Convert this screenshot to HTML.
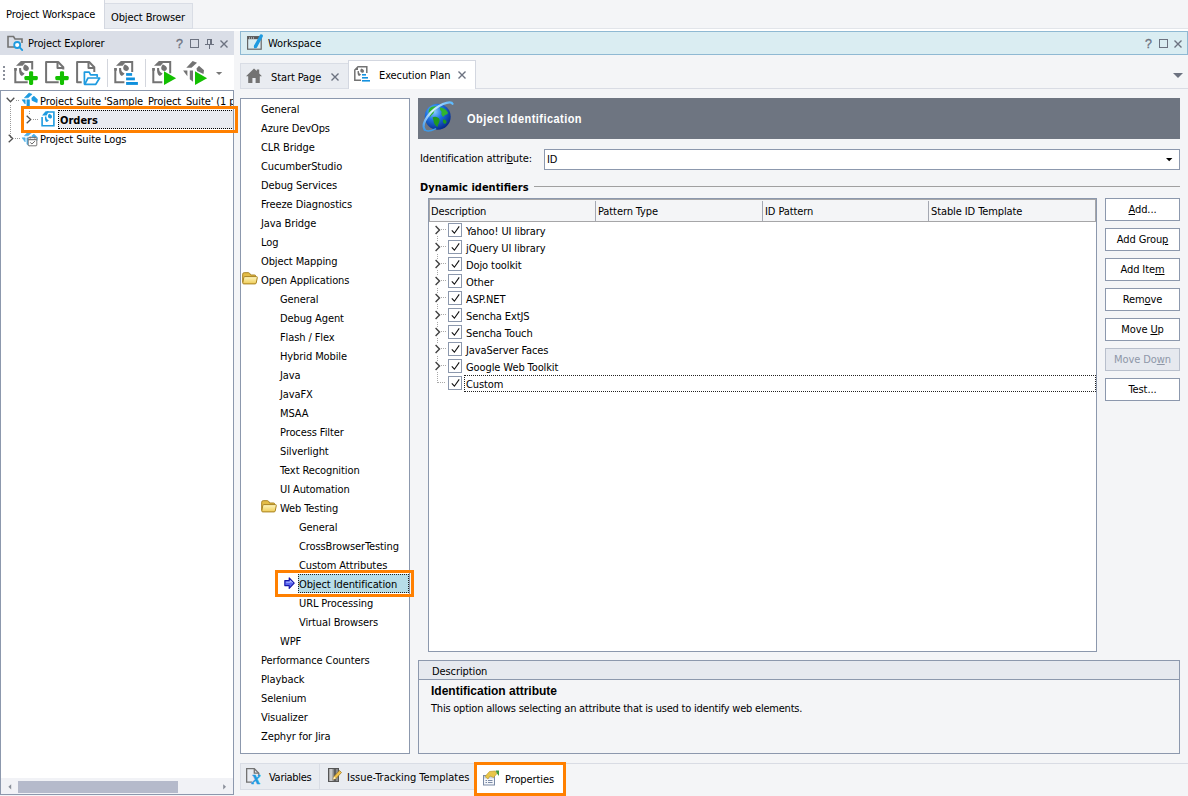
<!DOCTYPE html>
<html lang="en">
<head>
<meta charset="utf-8">
<title>Object Identification</title>
<style>
*{box-sizing:border-box;margin:0;padding:0}
html,body{width:1188px;height:796px;overflow:hidden}
body{position:relative;background:#f4f5f7;font-family:"DejaVu Sans Condensed","Liberation Sans","DejaVu Sans",sans-serif;font-size:11px;color:#000;letter-spacing:-0.1px;line-height:13px}
.a{position:absolute}
.t{position:absolute;white-space:nowrap;height:13px;line-height:13px}
.b{font-family:"Liberation Sans",sans-serif;font-weight:bold;letter-spacing:0}
.db{font-weight:bold;letter-spacing:0}
u{text-decoration:underline;text-underline-offset:1px}
svg{position:absolute;overflow:visible}
#toptabs-line{left:0;top:28px;width:1188px;height:3px;background:#fff;border-top:1px solid #e2e5ea}
#tab-pw{left:0;top:0;width:105px;height:29px;background:#fff;border-right:1px solid #d3d7e0}
#tab-ob{left:105px;top:3px;width:88px;height:26px;background:#e9ecf1;border:1px solid #d9dde5;border-left:none}
#pe-head{left:0;top:31px;width:234px;height:24px;background:#dadee7}
#pe-tree{left:0;top:90px;width:234px;height:705px;background:#fff;border:1px solid #8c98ad;overflow:hidden}
#pe-scroll{left:1px;top:778px;width:232px;height:16px;background:#f1f2f6}
#pe-thumb{left:18px;top:781px;width:160px;height:12px;background:#b5bacb}
.obox{position:absolute;border:3px solid #ff8000}
#ws-head{left:240px;top:31px;width:948px;height:24px;background:#daedf2;border:1px solid #8fb9d3}
#ws-tabline{left:240px;top:88px;width:948px;height:1px;background:#d9dce4}
#tab-sp{left:240px;top:63px;width:109px;height:26px;background:#e9ecf1;border:1px solid #d9dde5}
#tab-ep{left:348px;top:60px;width:128px;height:29px;background:#fff;border:1px solid #d3d7e0;border-bottom:none}
#opt-tree{left:240px;top:98px;width:170px;height:656px;background:#fff;border:1px solid #8c98ad}
#banner{left:418px;top:98px;width:762px;height:41px;background:#6e7581}
#combo{left:544px;top:149px;width:636px;height:21px;background:#fff;border:1px solid #8c98ad}
#dyn-line{left:534px;top:186px;width:646px;height:1px;background:#a0a0a0}
#grid{left:428px;top:198px;width:669px;height:454px;background:#fff;border:1px solid #8c98ad}
#grid-head{left:429px;top:199px;width:667px;height:23px;background:#f4f5f7;border:1px solid #9a9ea8;border-top:2px solid #9a9ea8;border-left:2px solid #9a9ea8}
.colsep{position:absolute;top:201px;width:1px;height:20px;background:#9a9ea8}
.btn{position:absolute;left:1105px;width:75px;height:23px;background:#fff;border:1px solid #8c98ad;text-align:center;line-height:22px}
.btn.dis{background:#e6e9ef;color:#8e97a8;border-color:#b8bfcc}
.cb{position:absolute;left:448px;width:14px;height:14px;background:#fff;border:1px solid #8c98ad}
#desc{left:418px;top:660px;width:762px;height:94px;border:1px solid #8c98ad;background:#f4f5f7}
#desc-head{left:419px;top:661px;width:760px;height:19px;background:#e6e9ef;border-bottom:1px solid #8c98ad}
#bt-line{left:240px;top:763px;width:948px;height:1px;background:#d9dce4}
#bt-var{left:240px;top:763px;width:80px;height:27px;background:#e9ecf1;border:1px solid #d9dde5}
#bt-iss{left:319px;top:763px;width:156px;height:27px;background:#e9ecf1;border:1px solid #d9dde5}
#bt-prop{left:474px;top:763px;width:92px;height:33px;background:#fff}
</style>
</head>
<body>
<div class="a" id="toptabs-line"></div>
<div class="a" id="tab-pw"></div>
<div class="a" id="tab-ob"></div>
<div class="t" style="left:6px;top:8px">Project Workspace</div>
<div class="t" style="left:111px;top:11px">Object Browser</div>
<div class="a" id="pe-head"></div>
<svg style="left:6px;top:34px" width="18" height="17" viewBox="0 0 18 17"><path d="M16,9 V5 H9 L7.5,2.5 H2 V13 H8" fill="none" stroke="#737373" stroke-width="1.6"/><circle cx="11.2" cy="11" r="3" fill="#fff" stroke="#1e9be0" stroke-width="1.8"/><path d="M13.4,13.2 L16.2,16" stroke="#1e9be0" stroke-width="1.8" stroke-linecap="round"/></svg>
<div class="t" style="left:28px;top:37px">Project Explorer</div>
<div class="t" style="left:176px;top:38px;color:#6c7280;font-size:12.5px;font-family:'Liberation Sans',sans-serif;-webkit-text-stroke:0.3px #6c7280">?</div>
<svg style="left:190px;top:39px" width="9" height="9" viewBox="0 0 9 9"><rect x="0.5" y="0.5" width="8" height="8" fill="none" stroke="#6c7280" stroke-width="1"/></svg>
<svg style="left:205px;top:39px" width="9" height="10" viewBox="0 0 9 10"><path d="M0,5.5 H9 M4.5,5.5 V10" stroke="#6c7280" stroke-width="1" fill="none"/><rect x="2.5" y="0.5" width="4" height="5" fill="none" stroke="#6c7280"/><rect x="5" y="0.5" width="1.5" height="5" fill="#6c7280"/></svg>
<svg style="left:220px;top:40px" width="8" height="8" viewBox="0 0 8 8"><path d="M0.5,0.5 L7.5,7.5 M7.5,0.5 L0.5,7.5" stroke="#6c7280" stroke-width="1.4" fill="none"/></svg>
<div class="a" style="left:0;top:55px;width:234px;height:35px;background:#fff"></div>
<svg style="left:3px;top:65px" width="2" height="16" viewBox="0 0 2 16"><rect x="0" y="1" width="2" height="2" fill="#8a8f9a"/><rect x="0" y="5" width="2" height="2" fill="#8a8f9a"/><rect x="0" y="9" width="2" height="2" fill="#8a8f9a"/><rect x="0" y="13" width="2" height="2" fill="#8a8f9a"/></svg>
<svg style="left:14px;top:61px" width="26" height="26" viewBox="0 0 26 26"><path d="M1.3,7.1 V21.15 H13.7" fill="none" stroke="#737373" stroke-width="2"/><rect x="0.3" y="7.1" width="2.6" height="2.6" fill="#737373"/><path d="M8,1 H18.2 V8.6" fill="none" stroke="#737373" stroke-width="2"/><path d="M2,4.7 L6.9,0 H11 V2 L8.6,4.7 Z" fill="#737373"/><g transform="translate(0,0) scale(1)" fill="#737373"><path d="M5.1,7.1 L7.1,7.1 C7,10 8,11.6 10.6,12.4 C9.6,13.8 8.4,14.6 7.2,14.8 C5.4,13.5 4.9,11 5.1,7.1 Z"/><path d="M10.7,3.5 C13.2,4.2 15.3,6 14.8,8.1 C14.3,10.1 12,10.5 10.3,9.3 C8.6,8 9,5.6 10.7,3.5 Z"/></g><rect x="10.400000000000002" y="15.05" width="13.4" height="4.1" rx="1.3" fill="#13c000"/><rect x="15.05" y="10.3" width="4.1" height="13.6" rx="1.3" fill="#13c000"/></svg>
<svg style="left:45px;top:61px" width="26" height="26" viewBox="0 0 26 26"><path d="M13.7,21.15 H1.1 V1 H13.2 L18.3,6.2 V8.6" fill="none" stroke="#737373" stroke-width="2" stroke-linejoin="round"/><path d="M12.5,1 V7 H18.3" fill="none" stroke="#737373" stroke-width="2" stroke-linejoin="round"/><rect x="10.3" y="15.05" width="13.4" height="4.1" rx="1.3" fill="#13c000"/><rect x="14.95" y="10.3" width="4.1" height="13.6" rx="1.3" fill="#13c000"/></svg>
<svg style="left:76px;top:61px" width="26" height="26" viewBox="0 0 26 26"><path d="M5.7,21.15 H1.1 V1 H13.2 L18.3,6.2 V10.9" fill="none" stroke="#737373" stroke-width="2" stroke-linejoin="round"/><path d="M12.5,1 V7 H18.3" fill="none" stroke="#737373" stroke-width="2" stroke-linejoin="round"/><path d="M8.4,23.2 V11.2 H13.2 L14.6,13.8 H21.2 V16.2" fill="none" stroke="#1e9be0" stroke-width="1.7" stroke-linejoin="round"/><path d="M8.7,23.3 L12,17 H23.6 L19.8,23.3 Z" fill="#fff" stroke="#1e9be0" stroke-width="1.7" stroke-linejoin="round"/></svg>
<div class="a" style="left:107px;top:59px;width:1px;height:28px;background:#d3d6dd"></div>
<svg style="left:114px;top:61px" width="26" height="26" viewBox="0 0 26 26"><path d="M1.3,7.1 V21.15 H10.4" fill="none" stroke="#737373" stroke-width="2"/><rect x="0.3" y="7.1" width="2.6" height="2.6" fill="#737373"/><path d="M8,1 H18.2 V10.9" fill="none" stroke="#737373" stroke-width="2"/><path d="M2,4.7 L6.9,0 H11 V2 L8.6,4.7 Z" fill="#737373"/><g transform="translate(0,0) scale(1)" fill="#737373"><path d="M5.1,7.1 L7.1,7.1 C7,10 8,11.6 10.6,12.4 C9.6,13.8 8.4,14.6 7.2,14.8 C5.4,13.5 4.9,11 5.1,7.1 Z"/><path d="M10.7,3.5 C13.2,4.2 15.3,6 14.8,8.1 C14.3,10.1 12,10.5 10.3,9.3 C8.6,8 9,5.6 10.7,3.5 Z"/></g><rect x="12.1" y="12.1" width="6" height="2.7" fill="#0f90dc"/><rect x="12.1" y="16.5" width="8.8" height="2.8" fill="#0f90dc"/><rect x="12.1" y="21" width="11.8" height="2.9" fill="#0f90dc"/></svg>
<div class="a" style="left:145px;top:59px;width:1px;height:28px;background:#d3d6dd"></div>
<svg style="left:152px;top:61px" width="26" height="26" viewBox="0 0 26 26"><path d="M1.3,7.1 V21.15 H10.3" fill="none" stroke="#737373" stroke-width="2"/><rect x="0.3" y="7.1" width="2.6" height="2.6" fill="#737373"/><path d="M8,1 H18.2 V12.3" fill="none" stroke="#737373" stroke-width="2"/><path d="M2,4.7 L6.9,0 H11 V2 L8.6,4.7 Z" fill="#737373"/><g transform="translate(0,0) scale(1)" fill="#737373"><path d="M5.1,7.1 L7.1,7.1 C7,10 8,11.6 10.6,12.4 C9.6,13.8 8.4,14.6 7.2,14.8 C5.4,13.5 4.9,11 5.1,7.1 Z"/><path d="M10.7,3.5 C13.2,4.2 15.3,6 14.8,8.1 C14.3,10.1 12,10.5 10.3,9.3 C8.6,8 9,5.6 10.7,3.5 Z"/></g><path d="M12,10.2 L24.1,17.2 L12,24.1 Z" fill="#13c000"/></svg>
<svg style="left:183px;top:61px" width="26" height="26" viewBox="0 0 26 26"><path d="M3.3,6.7 L9.6,0 L14,1.8 L8.5,6.7 Z" fill="#737373"/><path d="M13.5,7.5 L16,4.8 L21,9.3 L20.5,13 L14,10 Z" fill="#737373"/><path d="M0.1,9.5 H4.4 V15.2 Z" fill="#737373"/><path d="M6.8,9.5 H10 V20.8 L6.8,18.3 Z" fill="#737373"/><path d="M12,10.2 L24.1,17.2 L12,24.1 Z" fill="#13c000"/></svg>
<svg style="left:216px;top:72px" width="7" height="4" viewBox="0 0 7 4"><path d="M0,0 H6.2 L3.1,3.1 Z" fill="#777"/></svg>
<div class="a" id="pe-tree"><div class="a" style="left:57px;top:19px;width:176px;height:19px;background:#e9ebf0;border:1px dotted #000"></div><svg style="left:0;top:0" width="60" height="60"><g stroke="#9a9a9a" stroke-width="1" stroke-dasharray="1 1" fill="none"><path d="M9.5,14 V47"/><path d="M15,9.5 H19"/><path d="M14,47.5 H19"/><path d="M28.5,20 V24"/><path d="M32,28.5 H38"/></g></svg><svg style="left:5px;top:6px" width="9" height="6"><path d="M0.7,0.7 L4.5,4.7 L8.3,0.7" fill="none" stroke="#505050" stroke-width="1.3"/></svg><svg style="left:25px;top:24px" width="6" height="9"><path d="M0.7,0.7 L4.7,4.5 L0.7,8.3" fill="none" stroke="#505050" stroke-width="1.3"/></svg><svg style="left:7px;top:43px" width="6" height="9"><path d="M0.7,0.7 L4.7,4.5 L0.7,8.3" fill="none" stroke="#505050" stroke-width="1.3"/></svg><div class="t" style="left:39px;top:4px">Project Suite &#39;Sample_Project_Suite&#39; (1 project)</div><div class="t db" style="left:59px;top:23px">Orders</div><div class="t" style="left:39px;top:42px">Project Suite Logs</div></div>
<svg style="left:21.6px;top:92.6px" width="17" height="16" viewBox="0 0 17 16"><g transform="scale(0.72)" fill="#1e9be0" stroke="#1e9be0" stroke-width="0.8" stroke-linejoin="round"><path d="M3.3,6.7 L9.6,0 L14,1.8 L8.5,6.7 Z"/><path d="M14,7.3 L16.3,5 L21,9.3 L20.6,12.6 L14.4,9.8 Z" stroke-width="1.8"/><path d="M0.1,9.5 H4.4 V15.2 Z"/><path d="M6.8,9.5 H10.4 V20.8 L6.8,18.3 Z"/></g></svg>
<svg style="left:41px;top:111px" width="16" height="17" viewBox="0 0 16 17"><path d="M1.1,6 V14.8 H12.9 V1 H6" fill="none" stroke="#1e9be0" stroke-width="1.6"/><path d="M1,4.6 L4.6,0.3 H8 L5.6,4.6 Z" fill="#1e9be0"/><g transform="translate(0.3,0.3) scale(0.72)" fill="#1e9be0"><path d="M5.1,7.1 L7.1,7.1 C7,10 8,11.6 10.6,12.4 C9.6,13.8 8.4,14.6 7.2,14.8 C5.4,13.5 4.9,11 5.1,7.1 Z"/><path d="M10.7,3.5 C13.2,4.2 15.3,6 14.8,8.1 C14.3,10.1 12,10.5 10.3,9.3 C8.6,8 9,5.6 10.7,3.5 Z"/></g></svg>
<svg style="left:21.6px;top:130.6px" width="17" height="17" viewBox="0 0 17 17"><g transform="scale(0.72)" fill="#4db0e8" stroke="#4db0e8" stroke-width="0.8" stroke-linejoin="round"><path d="M3.3,6.7 L9.6,0 L14,1.8 L8.5,6.7 Z"/><path d="M14,7.3 L16.3,5 L21,9.3 L20.6,12.6 L14.4,9.8 Z" stroke-width="1.8"/><path d="M0.1,9.5 H4.4 V15.2 Z"/><path d="M6.8,9.5 H10.4 V20.8 L6.8,18.3 Z"/></g><rect x="6.2" y="6.6" width="8.6" height="8.2" rx="0.8" fill="#fff" stroke="#777" stroke-width="1"/><path d="M6.2,8.6 H14.8 M8.2,5.4 V7.6 M12.8,5.4 V7.6" stroke="#777" stroke-width="1.3"/><path d="M8.2,11.3 L9.9,13 L12.9,10.2" fill="none" stroke="#666" stroke-width="1"/></svg>
<div class="a" id="pe-scroll"></div>
<div class="a" id="pe-thumb"></div>
<svg style="left:8px;top:784px" width="4" height="6" viewBox="0 0 4 6"><path d="M3.2,0.2 V5.4 L0.4,2.8 Z" fill="#8a8f9a"/></svg>
<svg style="left:223px;top:784px" width="4" height="6" viewBox="0 0 4 6"><path d="M0.2,0.2 V5.4 L3,2.8 Z" fill="#8a8f9a"/></svg>
<div class="obox" style="left:21px;top:106px;width:217px;height:27px"></div>
<div class="a" id="ws-head"></div>
<svg style="left:247px;top:34px" width="17" height="17" viewBox="0 0 17 17"><rect x="0.6" y="2.6" width="13.6" height="12.6" fill="none" stroke="#666" stroke-width="1.2"/><rect x="0.6" y="2.6" width="12" height="2.6" fill="#5a5a5a"/><path d="M2,4 H3 M4,4 H5 M6,4 H7" stroke="#e8eef2" stroke-width="1"/><path d="M8.6,12.4 L14.2,2" stroke="#1e9be0" stroke-width="3.4" stroke-linecap="round"/><path d="M6.9,14.6 L7.4,10.8 L10.4,12.6 Z" fill="#1e9be0"/></svg>
<div class="t" style="left:268px;top:37px">Workspace</div>
<div class="t" style="left:1145px;top:38px;color:#6c7280;font-size:12.5px;font-family:'Liberation Sans',sans-serif;-webkit-text-stroke:0.3px #6c7280">?</div>
<svg style="left:1159px;top:39px" width="9" height="9" viewBox="0 0 9 9"><rect x="0.5" y="0.5" width="8" height="8" fill="none" stroke="#6c7280" stroke-width="1"/></svg>
<svg style="left:1174px;top:40px" width="8" height="8" viewBox="0 0 8 8"><path d="M0.5,0.5 L7.5,7.5 M7.5,0.5 L0.5,7.5" stroke="#6c7280" stroke-width="1.4" fill="none"/></svg>
<div class="a" id="ws-tabline"></div>
<div class="a" id="tab-sp"></div>
<div class="a" id="tab-ep"></div>
<svg style="left:246px;top:68px" width="17" height="16" viewBox="0 0 17 16"><path d="M0,8.2 L8,0.4 L10.8,3.1 V1.4 H13.2 V5.5 L16,8.2 H13.8 V15 H9.6 V10 H6.4 V15 H2.2 V8.2 Z" fill="#737373"/></svg>
<div class="t" style="left:271px;top:71px">Start Page</div>
<svg style="left:331px;top:73px" width="8" height="8" viewBox="0 0 8 8"><path d="M0.5,0.5 L7.5,7.5 M7.5,0.5 L0.5,7.5" stroke="#6c7280" stroke-width="1.4" fill="none"/></svg>
<svg style="left:354px;top:66px" width="17" height="17" viewBox="0 0 17 17"><path d="M7,14.2 H0.8 V4 L4,0.8 H12.8 V7" fill="none" stroke="#737373" stroke-width="1.5"/><path d="M0.8,4 L4,0.8 V4 Z" fill="#737373"/><g transform="translate(0.2,0.2) scale(0.66)" fill="#737373"><path d="M5.1,7.1 L7.1,7.1 C7,10 8,11.6 10.6,12.4 C9.6,13.8 8.4,14.6 7.2,14.8 C5.4,13.5 4.9,11 5.1,7.1 Z"/><path d="M10.7,3.5 C13.2,4.2 15.3,6 14.8,8.1 C14.3,10.1 12,10.5 10.3,9.3 C8.6,8 9,5.6 10.7,3.5 Z"/></g><rect x="8" y="8" width="4" height="1.6" fill="#1592e0"/><rect x="8" y="11" width="6" height="1.6" fill="#1592e0"/><rect x="8" y="14" width="8" height="1.6" fill="#1592e0"/></svg>
<div class="t" style="left:379px;top:69px">Execution Plan</div>
<svg style="left:458px;top:71px" width="8" height="8" viewBox="0 0 8 8"><path d="M0.5,0.5 L7.5,7.5 M7.5,0.5 L0.5,7.5" stroke="#6c7280" stroke-width="1.4" fill="none"/></svg>
<svg style="left:1173px;top:73px" width="10" height="5" viewBox="0 0 10 5"><path d="M0,0 H10 L5,5 Z" fill="#6c7280"/></svg>
<div class="a" id="opt-tree"></div>
<div class="a" style="left:298px;top:574px;width:111px;height:19px;background:#b7dde8;border:1px dotted #222"></div>
<div class="t" style="left:261px;top:103px">General</div>
<div class="t" style="left:261px;top:122px">Azure DevOps</div>
<div class="t" style="left:261px;top:141px">CLR Bridge</div>
<div class="t" style="left:261px;top:160px">CucumberStudio</div>
<div class="t" style="left:261px;top:179px">Debug Services</div>
<div class="t" style="left:261px;top:198px">Freeze Diagnostics</div>
<div class="t" style="left:261px;top:217px">Java Bridge</div>
<div class="t" style="left:261px;top:236px">Log</div>
<div class="t" style="left:261px;top:255px">Object Mapping</div>
<div class="t" style="left:261px;top:274px">Open Applications</div>
<div class="t" style="left:280px;top:293px">General</div>
<div class="t" style="left:280px;top:312px">Debug Agent</div>
<div class="t" style="left:280px;top:331px">Flash / Flex</div>
<div class="t" style="left:280px;top:350px">Hybrid Mobile</div>
<div class="t" style="left:280px;top:369px">Java</div>
<div class="t" style="left:280px;top:388px">JavaFX</div>
<div class="t" style="left:280px;top:407px">MSAA</div>
<div class="t" style="left:280px;top:426px">Process Filter</div>
<div class="t" style="left:280px;top:445px">Silverlight</div>
<div class="t" style="left:280px;top:464px">Text Recognition</div>
<div class="t" style="left:280px;top:483px">UI Automation</div>
<div class="t" style="left:280px;top:502px">Web Testing</div>
<div class="t" style="left:299px;top:521px">General</div>
<div class="t" style="left:299px;top:540px">CrossBrowserTesting</div>
<div class="t" style="left:299px;top:559px">Custom Attributes</div>
<div class="t" style="left:299px;top:578px">Object Identification</div>
<div class="t" style="left:299px;top:597px">URL Processing</div>
<div class="t" style="left:299px;top:616px">Virtual Browsers</div>
<div class="t" style="left:280px;top:635px">WPF</div>
<div class="t" style="left:261px;top:654px">Performance Counters</div>
<div class="t" style="left:261px;top:673px">Playback</div>
<div class="t" style="left:261px;top:692px">Selenium</div>
<div class="t" style="left:261px;top:711px">Visualizer</div>
<div class="t" style="left:261px;top:730px">Zephyr for Jira</div>
<svg style="left:242px;top:272px" width="17" height="14" viewBox="0 0 17 14"><defs><linearGradient id="fg" x1="0" y1="0" x2="0" y2="1"><stop offset="0" stop-color="#fff8c4"/><stop offset="1" stop-color="#eecb55"/></linearGradient></defs><path d="M0.7,10.5 V2.2 Q0.7,0.7 2.2,0.7 H6.3 Q7.4,0.7 7.9,1.7 L8.6,3 H12.6 Q13.7,3 13.7,4.2 V6" fill="#e4bd48" stroke="#a98322" stroke-width="1"/><path d="M0.8,10.8 L1.8,5.5 Q2,4.6 3,4.6 H14.4 Q15.5,4.6 15.3,5.6 L14.2,11 Q14,11.9 13,11.9 H1.8 Q0.6,11.9 0.8,10.8 Z" fill="url(#fg)" stroke="#a98322" stroke-width="1"/></svg>
<svg style="left:261px;top:500px" width="17" height="14" viewBox="0 0 17 14"><defs><linearGradient id="fg" x1="0" y1="0" x2="0" y2="1"><stop offset="0" stop-color="#fff8c4"/><stop offset="1" stop-color="#eecb55"/></linearGradient></defs><path d="M0.7,10.5 V2.2 Q0.7,0.7 2.2,0.7 H6.3 Q7.4,0.7 7.9,1.7 L8.6,3 H12.6 Q13.7,3 13.7,4.2 V6" fill="#e4bd48" stroke="#a98322" stroke-width="1"/><path d="M0.8,10.8 L1.8,5.5 Q2,4.6 3,4.6 H14.4 Q15.5,4.6 15.3,5.6 L14.2,11 Q14,11.9 13,11.9 H1.8 Q0.6,11.9 0.8,10.8 Z" fill="url(#fg)" stroke="#a98322" stroke-width="1"/></svg>
<svg style="left:284px;top:577px" width="11" height="12" viewBox="0 0 11 12"><path d="M5.2,0.8 V3.6 H0.8 V8.6 H5.2 V11.4 L10.2,6.1 Z" fill="#5a66f0" stroke="#1414a8" stroke-width="1.1" stroke-linejoin="round"/><path d="M2.2,5.2 H6.4 V3.6 L8.6,6" stroke="#b4beff" stroke-width="1" fill="none"/></svg>
<div class="obox" style="left:275px;top:570px;width:139px;height:27px"></div>
<div class="a" id="banner"></div>
<svg style="left:421px;top:100px" width="34" height="34" viewBox="0 0 34 34"><defs><radialGradient id="gl" cx="0.36" cy="0.3" r="0.8"><stop offset="0" stop-color="#8fd0ff"/><stop offset="0.4" stop-color="#1f74e4"/><stop offset="1" stop-color="#04207a"/></radialGradient><linearGradient id="rg" x1="1" y1="0" x2="0" y2="1"><stop offset="0" stop-color="#58b8ff"/><stop offset="0.5" stop-color="#d8f0ff"/><stop offset="1" stop-color="#3a98f0"/></linearGradient></defs><circle cx="16.7" cy="16.7" r="13" fill="url(#gl)"/><path d="M8.5,8.5 C10.5,6.5 14,5.5 16.5,6.8 C15.5,9 13.5,9.8 13,12 C12.5,14.2 10.2,14.8 9.2,17 C7.8,15.2 6.8,11.5 8.5,8.5Z" fill="#2fb52f"/><path d="M11.5,17.5 C14,16 17.5,17 18.5,19.5 C19,22 17,23.5 16.5,27 C14,25.5 12.5,22.5 12.5,20.5 Z" fill="#1f9a1f"/><path d="M19,7.5 C22.5,7.5 26,10 27,13 C26,15.2 23.5,14 22.5,17 C20.8,15.8 19.6,13.5 20.8,12 C19.6,10.8 18.5,9.5 19,7.5Z" fill="#2fb52f"/><path d="M22,19.5 C24.2,19 26,20.5 25.4,22.8 C24.3,24.5 22.6,23.8 22,22Z" fill="#1f9a1f"/><path d="M3.6,29.5 C-0.5,24 9,9.5 22,4 C27.5,1.8 31,2 31.6,3.8" fill="none" stroke="url(#rg)" stroke-width="2.2" stroke-linecap="round"/><path d="M3.6,29.5 C5.4,31.6 10,31 14.5,28.8" fill="none" stroke="#3f9be8" stroke-width="1.5" stroke-linecap="round"/></svg>
<div class="t b" style="left:467px;top:111px;color:#fff;font-size:12.5px;letter-spacing:0.5px;height:16px;line-height:16px;transform:scaleX(0.88);transform-origin:0 0">Object Identification</div>
<div class="t" style="left:420px;top:152px">Identification attri<u>b</u>ute:</div>
<div class="a" id="combo"></div>
<div class="t" style="left:547px;top:153px">ID</div>
<svg style="left:1166px;top:158px" width="7" height="4" viewBox="0 0 7 4"><path d="M0,0 H6.4 L3.2,3.3 Z" fill="#000"/></svg>
<div class="t db" style="left:420px;top:181px">Dynamic identifiers</div>
<div class="a" id="dyn-line"></div>
<div class="a" id="grid"></div>
<div class="a" style="left:429px;top:199px;width:667px;height:23px;background:#f4f5f7;border:1px solid #a6a6a8"></div>
<div class="a" style="left:595px;top:201px;width:1px;height:20px;background:#a4a8b2"></div>
<div class="a" style="left:762px;top:201px;width:1px;height:20px;background:#a4a8b2"></div>
<div class="a" style="left:928px;top:201px;width:1px;height:20px;background:#a4a8b2"></div>
<div class="t" style="left:431px;top:205px">Description</div>
<div class="t" style="left:598px;top:205px">Pattern Type</div>
<div class="t" style="left:765px;top:205px">ID Pattern</div>
<div class="t" style="left:931px;top:205px">Stable ID Template</div>
<svg style="left:430px;top:222px" width="20" height="180" viewBox="0 0 20 180"><g stroke="#a8a8a8" stroke-width="1" stroke-dasharray="1 1" fill="none"><path d="M7.5,12 V161"/><path d="M11,7.5 H16"/><path d="M11,24.5 H16"/><path d="M11,41.5 H16"/><path d="M11,58.5 H16"/><path d="M11,75.5 H16"/><path d="M11,92.5 H16"/><path d="M11,109.5 H16"/><path d="M11,126.5 H16"/><path d="M11,143.5 H16"/><path d="M8,160.5 H16"/></g></svg>
<div class="a" style="left:434px;top:225px;width:7px;height:11px;background:#fff"></div>
<svg style="left:435px;top:225px" width="6" height="10" viewBox="0 0 6 10"><path d="M0.6,0.9 L4.5,4.9 L0.6,8.9" fill="none" stroke="#404040" stroke-width="1.4"/></svg>
<div class="cb" style="top:223px"><svg style="left:0;top:0" width="12" height="12"><path d="M2.8,6.4 L5.4,9.2 L10.2,2.4" fill="none" stroke="#111" stroke-width="1.1"/></svg></div>
<div class="t" style="left:466px;top:225px">Yahoo! UI library</div>
<div class="a" style="left:434px;top:242px;width:7px;height:11px;background:#fff"></div>
<svg style="left:435px;top:242px" width="6" height="10" viewBox="0 0 6 10"><path d="M0.6,0.9 L4.5,4.9 L0.6,8.9" fill="none" stroke="#404040" stroke-width="1.4"/></svg>
<div class="cb" style="top:240px"><svg style="left:0;top:0" width="12" height="12"><path d="M2.8,6.4 L5.4,9.2 L10.2,2.4" fill="none" stroke="#111" stroke-width="1.1"/></svg></div>
<div class="t" style="left:466px;top:242px">jQuery UI library</div>
<div class="a" style="left:434px;top:259px;width:7px;height:11px;background:#fff"></div>
<svg style="left:435px;top:259px" width="6" height="10" viewBox="0 0 6 10"><path d="M0.6,0.9 L4.5,4.9 L0.6,8.9" fill="none" stroke="#404040" stroke-width="1.4"/></svg>
<div class="cb" style="top:257px"><svg style="left:0;top:0" width="12" height="12"><path d="M2.8,6.4 L5.4,9.2 L10.2,2.4" fill="none" stroke="#111" stroke-width="1.1"/></svg></div>
<div class="t" style="left:466px;top:259px">Dojo toolkit</div>
<div class="a" style="left:434px;top:276px;width:7px;height:11px;background:#fff"></div>
<svg style="left:435px;top:276px" width="6" height="10" viewBox="0 0 6 10"><path d="M0.6,0.9 L4.5,4.9 L0.6,8.9" fill="none" stroke="#404040" stroke-width="1.4"/></svg>
<div class="cb" style="top:274px"><svg style="left:0;top:0" width="12" height="12"><path d="M2.8,6.4 L5.4,9.2 L10.2,2.4" fill="none" stroke="#111" stroke-width="1.1"/></svg></div>
<div class="t" style="left:466px;top:276px">Other</div>
<div class="a" style="left:434px;top:293px;width:7px;height:11px;background:#fff"></div>
<svg style="left:435px;top:293px" width="6" height="10" viewBox="0 0 6 10"><path d="M0.6,0.9 L4.5,4.9 L0.6,8.9" fill="none" stroke="#404040" stroke-width="1.4"/></svg>
<div class="cb" style="top:291px"><svg style="left:0;top:0" width="12" height="12"><path d="M2.8,6.4 L5.4,9.2 L10.2,2.4" fill="none" stroke="#111" stroke-width="1.1"/></svg></div>
<div class="t" style="left:466px;top:293px">ASP.NET</div>
<div class="a" style="left:434px;top:310px;width:7px;height:11px;background:#fff"></div>
<svg style="left:435px;top:310px" width="6" height="10" viewBox="0 0 6 10"><path d="M0.6,0.9 L4.5,4.9 L0.6,8.9" fill="none" stroke="#404040" stroke-width="1.4"/></svg>
<div class="cb" style="top:308px"><svg style="left:0;top:0" width="12" height="12"><path d="M2.8,6.4 L5.4,9.2 L10.2,2.4" fill="none" stroke="#111" stroke-width="1.1"/></svg></div>
<div class="t" style="left:466px;top:310px">Sencha ExtJS</div>
<div class="a" style="left:434px;top:327px;width:7px;height:11px;background:#fff"></div>
<svg style="left:435px;top:327px" width="6" height="10" viewBox="0 0 6 10"><path d="M0.6,0.9 L4.5,4.9 L0.6,8.9" fill="none" stroke="#404040" stroke-width="1.4"/></svg>
<div class="cb" style="top:325px"><svg style="left:0;top:0" width="12" height="12"><path d="M2.8,6.4 L5.4,9.2 L10.2,2.4" fill="none" stroke="#111" stroke-width="1.1"/></svg></div>
<div class="t" style="left:466px;top:327px">Sencha Touch</div>
<div class="a" style="left:434px;top:344px;width:7px;height:11px;background:#fff"></div>
<svg style="left:435px;top:344px" width="6" height="10" viewBox="0 0 6 10"><path d="M0.6,0.9 L4.5,4.9 L0.6,8.9" fill="none" stroke="#404040" stroke-width="1.4"/></svg>
<div class="cb" style="top:342px"><svg style="left:0;top:0" width="12" height="12"><path d="M2.8,6.4 L5.4,9.2 L10.2,2.4" fill="none" stroke="#111" stroke-width="1.1"/></svg></div>
<div class="t" style="left:466px;top:344px">JavaServer Faces</div>
<div class="a" style="left:434px;top:361px;width:7px;height:11px;background:#fff"></div>
<svg style="left:435px;top:361px" width="6" height="10" viewBox="0 0 6 10"><path d="M0.6,0.9 L4.5,4.9 L0.6,8.9" fill="none" stroke="#404040" stroke-width="1.4"/></svg>
<div class="cb" style="top:359px"><svg style="left:0;top:0" width="12" height="12"><path d="M2.8,6.4 L5.4,9.2 L10.2,2.4" fill="none" stroke="#111" stroke-width="1.1"/></svg></div>
<div class="t" style="left:466px;top:361px">Google Web Toolkit</div>
<div class="cb" style="top:376px"><svg style="left:0;top:0" width="12" height="12"><path d="M2.8,6.4 L5.4,9.2 L10.2,2.4" fill="none" stroke="#111" stroke-width="1.1"/></svg></div>
<div class="t" style="left:466px;top:378px">Custom</div>
<div class="a" style="left:464px;top:375px;width:632px;height:17px;border:1px dotted #222"></div>
<div class="btn" style="top:198px"><u>A</u>dd...</div>
<div class="btn" style="top:228px">Add Grou<u>p</u></div>
<div class="btn" style="top:258px">Add Ite<u>m</u></div>
<div class="btn" style="top:288px">Rem<u>o</u>ve</div>
<div class="btn" style="top:318px">Move <u>U</u>p</div>
<div class="btn dis" style="top:348px">Move Do<u>w</u>n</div>
<div class="btn" style="top:378px">Test...</div>
<div class="a" id="desc"></div>
<div class="a" id="desc-head"></div>
<div class="t" style="left:432px;top:665px">Description</div>
<div class="t b" style="left:431px;top:684px;font-size:12px;height:14px;line-height:14px">Identification attribute</div>
<div class="t" style="left:431px;top:702px;letter-spacing:-0.22px">This option allows selecting an attribute that is used to identify web elements.</div>
<div class="a" id="bt-line"></div>
<div class="a" id="bt-var"></div>
<div class="a" id="bt-iss"></div>
<div class="a" id="bt-prop"></div>
<svg style="left:246px;top:768px" width="18" height="18" viewBox="0 0 18 18"><path d="M6,14.2 H0.65 V0.65 H8.3 L12.8,5.2 V8" fill="none" stroke="#737373" stroke-width="1.3"/><path d="M8.3,0.65 V5.2 H12.8" fill="none" stroke="#737373" stroke-width="1.3"/><text x="5.4" y="16.4" style="font-family:'Liberation Serif',serif;letter-spacing:0" font-style="italic" font-weight="bold" font-size="18" fill="#1e9be0" stroke="#1e9be0" stroke-width="0.5">x</text></svg>
<div class="t" style="left:269px;top:771px;letter-spacing:-0.3px">Variables</div>
<svg style="left:328px;top:768px" width="15" height="15" viewBox="0 0 15 15"><rect x="0.5" y="0.5" width="10" height="13" fill="#8a8a8a" stroke="#555" stroke-width="1"/><rect x="1.5" y="1" width="3" height="12" fill="#c8c8c8"/><rect x="6" y="1" width="2" height="12" fill="#5e5e5e"/><path d="M5,11.5 L6,8.5 L11.5,2.5 L13.5,4.5 L8,10.5 Z" fill="#f3c24a" stroke="#9a7420" stroke-width="0.7"/><path d="M5,11.5 L6,8.5 L8,10.5 Z" fill="#fff2c8"/></svg>
<div class="t" style="left:347px;top:771px;letter-spacing:0">Issue-Tracking Templates</div>
<svg style="left:483px;top:770px" width="17" height="16" viewBox="0 0 17 16"><rect x="0.5" y="5.5" width="11" height="9.5" fill="#f4f6fa" stroke="#7a8aa5" stroke-width="1"/><rect x="1" y="6" width="10" height="2.5" fill="#c9d6ea"/><path d="M2.5,10.5 H4 M5,10.5 H9.5 M2.5,12.5 H4 M5,12.5 H9.5" stroke="#7a8aa5" stroke-width="1"/><path d="M2,6.5 L6.5,1.5 L12,1 L14,3.5 L10.5,7.5 L7,6 L5,9 Z" fill="#e8c64a" stroke="#b89424" stroke-width="0.6"/><path d="M12.5,0.5 H16 V6 L14,3.5 Z" fill="#3f9a3f"/></svg>
<div class="t" style="left:505px;top:773px">Properties</div>
<div class="obox" style="left:474px;top:762px;width:92px;height:34px"></div>
</body>
</html>
